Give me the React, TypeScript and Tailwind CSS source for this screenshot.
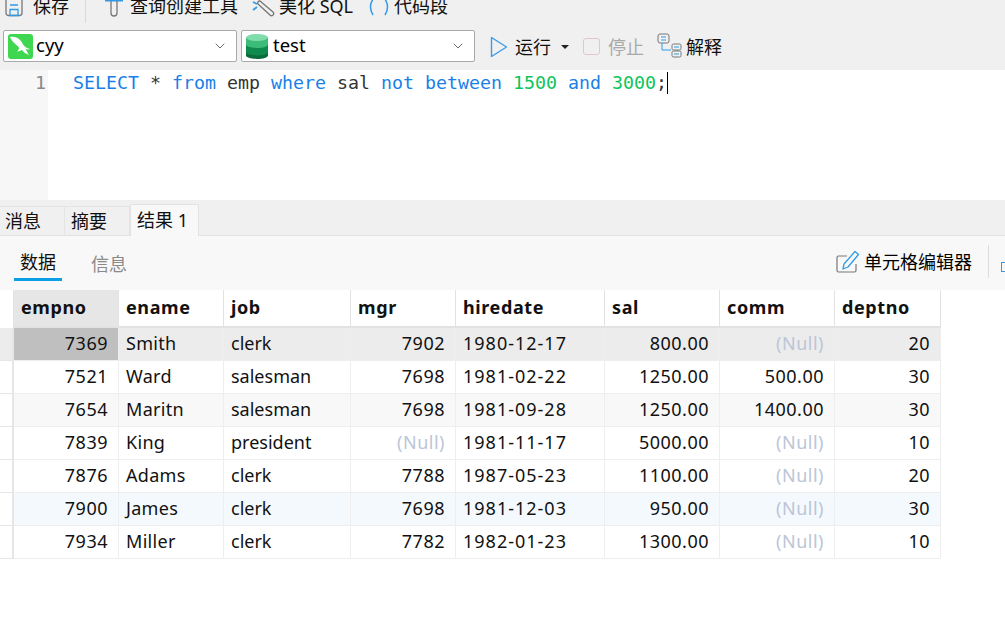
import React from "react";
import { ChevronDown } from "lucide-react";

const cjk = "font-['Noto_Sans','Noto_Sans_CJK_SC',sans-serif]";

const columns = [
  { name: "empno", w: "w-[105px]", right: true },
  { name: "ename", w: "w-[105px]", right: false },
  { name: "job", w: "w-[127px]", right: false },
  { name: "mgr", w: "w-[105px]", right: true },
  { name: "hiredate", w: "w-[149px]", right: false },
  { name: "sal", w: "w-[115px]", right: true },
  { name: "comm", w: "w-[115px]", right: true },
  { name: "deptno", w: "w-[106px]", right: true },
];

const rows = [
  { bg: "bg-[#ececec]", cells: ["7369", "Smith", "clerk", "7902", "1980-12-17", "800.00", null, "20"] },
  { bg: "bg-white", cells: ["7521", "Ward", "salesman", "7698", "1981-02-22", "1250.00", "500.00", "30"] },
  { bg: "bg-[#f8f8f8]", cells: ["7654", "Maritn", "salesman", "7698", "1981-09-28", "1250.00", "1400.00", "30"] },
  { bg: "bg-white", cells: ["7839", "King", "president", null, "1981-11-17", "5000.00", null, "10"] },
  { bg: "bg-white", cells: ["7876", "Adams", "clerk", "7788", "1987-05-23", "1100.00", null, "20"] },
  { bg: "bg-[#f4f9fd]", cells: ["7900", "James", "clerk", "7698", "1981-12-03", "950.00", null, "30"] },
  { bg: "bg-white", cells: ["7934", "Miller", "clerk", "7782", "1982-01-23", "1300.00", null, "10"] },
];

const Dolphin = () => (
  <svg width="25" height="25" viewBox="0 0 25 25" className="shrink-0">
    <rect width="25" height="25" rx="3" fill="#3fd74f" />
    <path
      d="M2 3c4-1 7 .2 9.500 2.400 2.300 2 3 4.600 4.800 6.600 1.400 1.500 3.200 2.400 5.700 3.100-1.700.5-3.100.3-4.400-.3.800 2 2 3.900 3.400 6.200-3.200-1-5.500-3-7-5.300-1.300 1-3 1.600-5 1.800 1.200-1.100 1.900-2.400 2.100-3.800C9 11.500 7 10 5.500 8.300 4.200 6.900 3 5.500 2 3z"
      fill="#fff"
    />
  </svg>
);

const DbIcon = () => (
  <svg width="22" height="25" viewBox="0 0 22 25" className="shrink-0">
    <path d="M0 18v3.500C0 23.400 5 25 11 25s11-1.600 11-3.500V18z" fill="#0a6b3c" />
    <path d="M0 10v8c0 1.900 5 3.500 11 3.500S22 19.900 22 18v-8z" fill="#0f8a4d" />
    <path d="M0 3.500v7c0 1.900 5 3.500 11 3.500s11-1.600 11-3.500v-7z" fill="#3dbb78" />
    <ellipse cx="11" cy="3.500" rx="11" ry="3.500" fill="#7fdcab" />
  </svg>
);

const Select = ({ icon, label, gap }: { icon: React.ReactNode; label: string; gap: string }) => (
  <div className="flex h-[32px] w-[234px] items-center rounded-[2px] border border-[#a9a9a9] bg-white pl-1 pr-2">
    {icon}
    <span className={`${gap} flex-1 pb-[2px] text-[18.5px] leading-none text-black`}>{label}</span>
    <ChevronDown size={16} strokeWidth={1.3} className="text-[#555]" />
  </div>
);

export default function App() {
  return (
    <div className={`h-[630px] w-[1005px] overflow-hidden bg-white ${cjk} text-[#111]`}>
      {/* toolbar */}
      <div className="h-[70px] bg-[#f0f0f0]">
        <div className="flex h-[23px] items-start overflow-hidden pl-[5px] text-[18px] leading-none">
          <div className="-mt-[3px] flex h-[18px] items-center">
            <svg width="20" height="18" viewBox="0 0 20 18" fill="none" className="mt-[4px]">
              <path d="M1 0v14a2.500 2.500 0 0 0 2.500 2.500h11A2.500 2.500 0 0 0 17 14V0" stroke="#777" strokeWidth="1.300" />
              <path d="M5 6h8M5 10.500h8v6H5z" stroke="#2f9be8" strokeWidth="1.300" />
            </svg>
            <span className="ml-[8px]">保存</span>
          </div>
          <div className="ml-[16px] h-[23px] w-px bg-[#d8d8d8]" />
          <div className="-mt-[3px] ml-[18px] flex h-[18px] items-center">
            <svg width="20" height="18" viewBox="0 0 20 18" fill="none" className="mt-[4px]">
              <path d="M1 1.500h18" stroke="#2f9be8" strokeWidth="2" />
              <path d="M7 2v12a3 3 0 0 0 6 0V2" stroke="#777" strokeWidth="1.300" />
            </svg>
            <span className="ml-[6px]">查询创建工具</span>
          </div>
          <div className="-mt-[3px] ml-[14px] flex h-[18px] items-center">
            <svg width="24" height="18" viewBox="0 0 24 18" fill="none" className="mt-[4px]">
              <path d="M1 3l4 2M1 11l4-3" stroke="#2f9be8" strokeWidth="1.800" />
              <path d="M8 2l13 11a2 2 0 0 1-3 3L6 5a2 2 0 0 1 2-3z" stroke="#777" strokeWidth="1.300" />
            </svg>
            <span className="ml-[3px] whitespace-pre">美化 SQL</span>
          </div>
          <div className="-mt-[3px] ml-[15px] flex h-[18px] items-center">
            <svg width="22" height="18" viewBox="0 0 22 18" fill="none" className="mt-[4px]">
              <path d="M5 0Q0 8 5 16M17 0q5 8 0 16" stroke="#2f9be8" strokeWidth="1.500" />
            </svg>
            <span className="ml-[4px]">代码段</span>
          </div>
        </div>
        <div className="mt-[7px] flex items-center pl-[3px]">
          <Select icon={<Dolphin />} label="cyy" gap="ml-[3px]" />
          <div className="ml-[4px]">
            <Select icon={<DbIcon />} label="test" gap="ml-[5px]" />
          </div>
          <div className="ml-[15px] flex items-center pt-[1px] text-[18px] leading-none">
            <svg width="18" height="22" viewBox="0 0 18 22" fill="none">
              <path d="M1.500 1.500v19L16.500 11z" stroke="#3b9bea" strokeWidth="1.400" strokeLinejoin="round" />
            </svg>
            <span className="ml-[7px]">运行</span>
            <span className="ml-[10px] h-0 w-0 border-x-[4px] border-t-[4px] border-x-transparent border-t-[#222]" />
            <span className="ml-[14px] h-[17px] w-[17px] rounded-[3px] border border-[#e0c8c4]" />
            <span className="ml-[8px] text-[#a9a9a9]">停止</span>
            <svg width="26" height="25" viewBox="0 0 26 25" fill="none" className="ml-[13px] -mt-[2px]">
              <rect x="1" y="1" width="11" height="9" rx="2" stroke="#777" />
              <path d="M4 4h5M4 7h5M17 14h5M17 21h5" stroke="#2f9be8" />
              <path d="M5 10v7h9" stroke="#2f9be8" />
              <rect x="15" y="11" width="9" height="6" rx="1.500" stroke="#777" />
              <rect x="15" y="18" width="9" height="6" rx="1.500" stroke="#777" />
            </svg>
            <span className="ml-[3px]">解释</span>
          </div>
        </div>
      </div>

      {/* editor */}
      <div className="flex h-[130px] bg-white">
        <div className="w-[48px] bg-[#f7f7f7] pr-[2px] pt-[2px] text-right font-['DejaVu_Sans_Mono',monospace] text-[18.27px] leading-[22px] text-[#8a8a8a]">
          1
        </div>
        <div className="pl-[25px] pt-[2px] font-['DejaVu_Sans_Mono',monospace] text-[18.27px] leading-[22px] whitespace-pre">
          <span className="text-[#1a7fe8]">SELECT</span>
          <span className="text-[#333]"> * </span>
          <span className="text-[#1a7fe8]">from</span>
          <span className="text-[#333]"> emp </span>
          <span className="text-[#1a7fe8]">where</span>
          <span className="text-[#333]"> sal </span>
          <span className="text-[#1a7fe8]">not between</span>
          <span> </span>
          <span className="text-[#0ec45a]">1500</span>
          <span> </span>
          <span className="text-[#1a7fe8]">and</span>
          <span> </span>
          <span className="text-[#0ec45a]">3000</span>
          <span className="text-[#333]">;</span>
          <span className="inline-block h-[22px] w-px bg-black align-top" />
        </div>
      </div>

      {/* result tabs */}
      <div className="flex h-[36px] items-end border-b border-[#e2e2e2] bg-[#f0f0f0] text-[18px] leading-none">
        <div className="flex h-[29px] w-[65px] items-center border-r border-t border-[#e4e4e4] pl-[5px]">消息</div>
        <div className="flex h-[29px] w-[65px] items-center border-r border-t border-[#e4e4e4] pl-[6px]">摘要</div>
        <div className="-mb-px flex h-[32px] w-[69px] items-center rounded-t-[2px] border-x border-t border-[#e2e2e2] bg-[#f8f8f8] pb-[2px] pl-[6px] whitespace-pre">结果 1</div>
      </div>

      {/* data / info bar */}
      <div className="flex h-[54px] items-start bg-[#f8f8f8] pl-[14px] text-[18px] leading-none">
        <div className="mt-[12px] flex h-[33px] w-[48px] items-center justify-center border-b-[3px] border-[#0b9fe6] pb-[2px]">数据</div>
        <div className="ml-[29px] mt-[19px] text-[#8a8a8a]">信息</div>
        <div className="ml-auto mt-[9px] flex h-[33px] items-center">
          <svg width="24" height="24" viewBox="0 0 24 24" fill="none">
            <path d="M11 6H2.500A1.500 1.500 0 0 0 1 7.500v13A1.500 1.500 0 0 0 2.500 22h16a1.500 1.500 0 0 0 1.500-1.500V14" stroke="#777" strokeWidth="1.200" />
            <path d="M19 1.500l3.500 3L12 17l-5 2 1-5z" stroke="#2f9be8" strokeWidth="1.300" strokeLinejoin="round" />
          </svg>
          <span className="ml-[4px] text-black">单元格编辑器</span>
          <div className="ml-[16px] h-[33px] w-px bg-[#dcdcdc]" />
          <span className="ml-[12px] mt-[10px] h-[10px] w-[4px] border border-r-0 border-[#2f9be8]" />
        </div>
      </div>

      {/* grid */}
      <div className="text-[18px] leading-none text-[#111]">
        <div className="flex h-[38px]">
          <div className="w-[14px] border-r border-[#e2e2e2]" />
          {columns.map((c, i) => (
            <div
              key={c.name}
              className={`flex ${c.w} items-center border-b-2 border-r border-[#e2e2e2] pb-[2px] pl-[7px] font-bold tracking-[0.6px] ${i === 0 ? "bg-[#e6e6e6]" : "bg-white"}`}
            >
              {c.name}
            </div>
          ))}
        </div>
        {rows.map((row, r) => (
          <div key={r} className="flex h-[33px]">
            <div className={`w-[14px] border-b border-r-2 border-[#e6e6e6] ${r === 0 ? "bg-[#ececec]" : "bg-white"}`} />
            {row.cells.map((cell, i) => {
              const c = columns[i];
              const selected = r === 0 && i === 0;
              return (
                <div
                  key={i}
                  className={`flex ${c.w} items-center border-b border-r border-[#eeeeee] pb-[2px] ${c.right ? "justify-end pr-[10px] tracking-[0.5px]" : "pl-[7px]"} ${i === 4 ? "tracking-[1px]" : ""} ${i === 1 ? "tracking-[0.3px]" : ""} ${selected ? "bg-[#bfbfbf]" : row.bg} ${cell === null ? "text-[#bcc5d8]" : ""}`}
                >
                  {cell === null ? "(Null)" : cell}
                </div>
              );
            })}
          </div>
        ))}
      </div>
    </div>
  );
}
